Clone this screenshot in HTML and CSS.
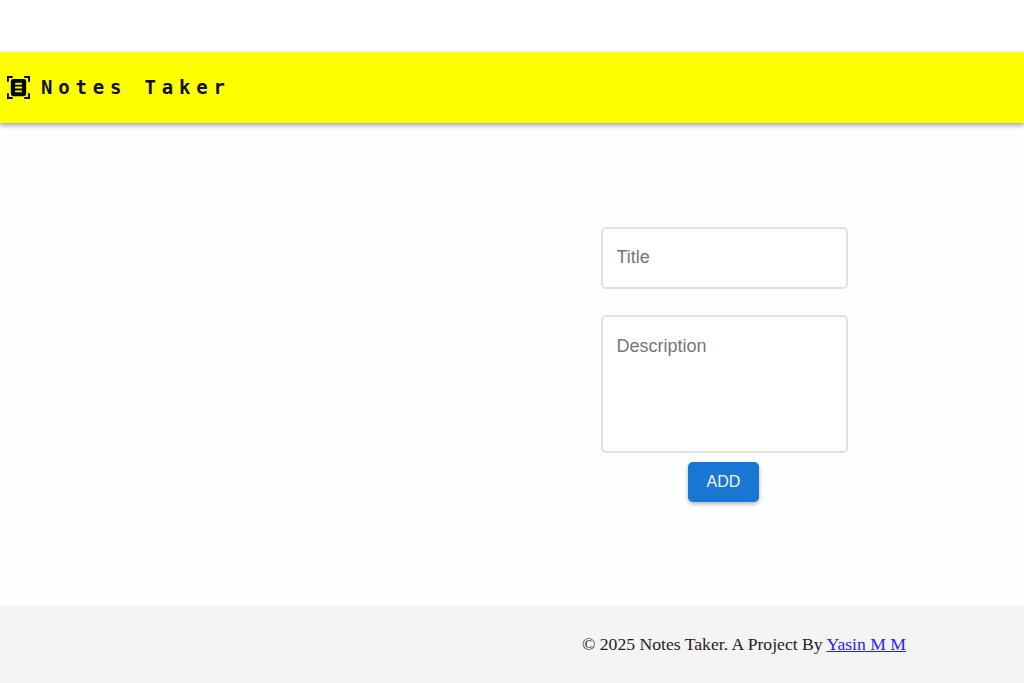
FILE: index.html

```html
<!DOCTYPE html>
<html lang="en">
<head>
  <meta charset="UTF-8" />
  <title>Notes Taker</title>
  <link rel="stylesheet" href="styles.css">
</head>
<body>
  <header class="navbar">
    <svg class="logo" viewBox="0 0 24 24" width="23" height="23" aria-hidden="true">
      <path class="logo-corners" d="M1 6V1h5M18 1h5v5M23 18v5h-5M6 23H1v-5" />
      <rect class="logo-page" x="4" y="3" width="16" height="18" rx="2.5" />
      <path class="logo-lines" d="M8.5 8h7M8.5 12h7M8.5 16h7" />
    </svg>
    <span class="brand">Notes Taker</span>
  </header>

  <main class="content">
    <form class="note-form">
      <input type="text" class="field" placeholder="Title" />
      <textarea class="field field-area" placeholder="Description"></textarea>
      <button type="button" class="add-btn">ADD</button>
    </form>
  </main>

  <footer class="footer">
    <p>&copy; 2025 Notes Taker. A Project By <a href="#">Yasin M M</a></p>
  </footer>
</body>
</html>
```

FILE: styles.css

```css
* { box-sizing: border-box; }

html, body { height: 100%; }

body {
  margin: 0;
  padding-top: 52px;
  display: flex;
  flex-direction: column;
  background: #fff;
  overflow: hidden;
}

.navbar {
  position: relative;
  z-index: 1;
  height: 71px;
  display: flex;
  align-items: center;
  gap: 11px;
  padding-left: 7px;
  background: #ffff00;
  box-shadow: 0 2px 5px rgba(0, 0, 0, 0.4);
}
.logo { flex: none; }
.logo-corners { fill: none; stroke: #000; stroke-width: 2; }
.logo-page { fill: #000; }
.logo-lines { fill: none; stroke: #ffff00; stroke-width: 2; }
.brand {
  padding-bottom: 2px;
  font-family: "DejaVu Sans Mono", monospace;
  font-weight: 700;
  font-size: 19px;
  letter-spacing: 5.8px;
  color: #111;
}

.content {
  flex: 1;
  display: flex;
  justify-content: flex-end;
  padding: 104px 176px 0 0;
  background: #fefefe;
}
.note-form {
  width: 247px;
  display: flex;
  flex-direction: column;
  align-items: center;
}
.field {
  display: block;
  width: 100%;
  height: 62px;
  padding: 0 13.5px 2px;
  margin-bottom: 26px;
  border: 2px solid #e0e0e0;
  border-radius: 5px;
  background: #fff;
  font-family: "Liberation Sans", sans-serif;
  font-size: 18px;
  outline: none;
}
.field::placeholder { color: #757575; }
.field-area {
  height: 138px;
  padding: 19px 13.5px;
  margin-bottom: 9px;
  resize: none;
}
.add-btn {
  width: 71px;
  height: 40px;
  margin-right: 2px;
  border: none;
  border-radius: 5px;
  background: #1976d2;
  color: #f2f6fb;
  font-family: "Liberation Sans", sans-serif;
  font-size: 16px;
  box-shadow: 0 2px 4px rgba(0, 0, 0, 0.3);
  cursor: pointer;
}

.footer {
  height: 77px;
  display: flex;
  align-items: center;
  justify-content: flex-end;
  padding-right: 118px;
  background: #f4f4f4;
  font-family: "Liberation Serif", serif;
  font-size: 17.65px;
  color: #222;
}
.footer p { margin: 0; }
.footer a { color: #2222ff; }
```
